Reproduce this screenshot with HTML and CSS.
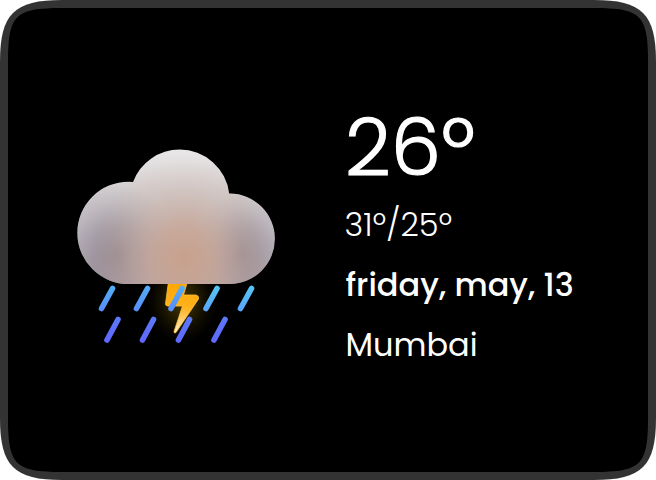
FILE: index.html
```html
<!DOCTYPE html>
<html lang="en">
<head>
<meta charset="utf-8">
<title>Weather</title>
<link rel="stylesheet" href="styles.css">
</head>
<body>
<main class="widget">
  <svg class="frame" viewBox="0 0 656 480" aria-hidden="true">
    <path fill="#333" d="M0 62C0 14 14 0 62 0H594C642 0 656 14 656 62V418C656 466 642 480 594 480H62C14 480 0 466 0 418Z"/>
    <path fill="#000" d="M8 62C8 15 15 8 62 8H594C641 8 648 15 648 62V418C648 465 641 472 594 472H62C15 472 8 465 8 418Z"/>
  </svg>
  <svg class="icon" viewBox="65 130 220 220" aria-hidden="true">
    <defs>
      <linearGradient id="base" x1="0" y1="150" x2="0" y2="284" gradientUnits="userSpaceOnUse">
        <stop offset="0" stop-color="#e9e7e8"/><stop offset=".35" stop-color="#cfcacc"/><stop offset=".7" stop-color="#bbb5bd"/><stop offset="1" stop-color="#b0a4ac"/>
      </linearGradient>
      <radialGradient id="shade"><stop offset="0" stop-color="#85777f" stop-opacity=".75"/><stop offset=".4" stop-color="#867b88" stop-opacity=".48"/><stop offset=".75" stop-color="#8c8492" stop-opacity=".15"/><stop offset="1" stop-color="#8c8594" stop-opacity="0"/></radialGradient>
      <radialGradient id="warm"><stop offset="0" stop-color="#c8a08c"/><stop offset=".3" stop-color="#c9a592" stop-opacity=".8"/><stop offset=".65" stop-color="#ceb0a0" stop-opacity=".35"/><stop offset="1" stop-color="#d4b8a4" stop-opacity="0"/></radialGradient>
      <radialGradient id="glow"><stop offset="0" stop-color="#6b5600" stop-opacity=".75"/><stop offset=".5" stop-color="#3c3000" stop-opacity=".5"/><stop offset="1" stop-color="#1a1500" stop-opacity="0"/></radialGradient>
      <linearGradient id="bolt" x1="180" y1="280" x2="178" y2="334" gradientUnits="userSpaceOnUse">
        <stop offset="0" stop-color="#ffa600"/><stop offset=".5" stop-color="#ffb21c"/><stop offset="1" stop-color="#fff2cc"/>
      </linearGradient>
      <linearGradient id="lower" x1="0" y1="318" x2="0" y2="342" gradientUnits="userSpaceOnUse">
        <stop offset="0" stop-color="#5c78f8"/><stop offset="1" stop-color="#6068ff"/>
      </linearGradient>
      <linearGradient id="drop" x1="0" y1="287" x2="0" y2="311" gradientUnits="userSpaceOnUse">
        <stop offset="0" stop-color="#52adf6"/><stop offset="1" stop-color="#5a8cfb"/>
      </linearGradient>
      <linearGradient id="dropRight" x1="0" y1="287" x2="0" y2="311" gradientUnits="userSpaceOnUse">
        <stop offset="0" stop-color="#55c5f2"/><stop offset="1" stop-color="#5aa3fa"/>
      </linearGradient>
      <clipPath id="cloud">
        <circle cx="128.500" cy="232.900" r="51.200"/>
        <circle cx="179.700" cy="199.300" r="49.800"/>
        <circle cx="229.700" cy="238.800" r="45.200"/>
        <path d="M128.500 200H229.700V284H128.500Z"/>
      </clipPath>
    </defs>
    <ellipse cx="182" cy="301" rx="36" ry="43" fill="url(#glow)"/>
    <path fill="url(#bolt)" stroke="#ffc044" stroke-width=".8" stroke-linejoin="round" d="M169 278L165.500 304Q165.500 306 168 306H182.500L174 331.500Q174 334 176 332.500L198.500 299Q199 295 195 295H183.500L188.500 278Z"/>
    <g stroke-width="5.600" stroke-linecap="round">
      <path stroke="url(#drop)" d="M112.500 288.500L101.500 308.500M147.500 288.500L136.500 308.500M182 288.500L171 308.500"/>
      <path stroke="url(#dropRight)" d="M217 288.500L206 308.500M251.500 288.500L240.500 308.500"/>
      <path stroke="url(#lower)" d="M118 319.500L107 340M153.500 319.500L142.500 340M189.500 319.500L178.500 340M225 319.500L214 340"/>
    </g>
    <g clip-path="url(#cloud)">
      <path fill="url(#base)" d="M70 145H280V285H70Z"/>
      <ellipse cx="117" cy="255" rx="60" ry="72" fill="url(#shade)"/>
      <ellipse cx="241" cy="254" rx="46" ry="62" fill="url(#shade)"/>
      <ellipse cx="184" cy="258" rx="90" ry="100" fill="url(#warm)"/>
    </g>
  </svg>
  <section class="details">
    <p class="temp">26º</p>
    <p class="range">31º/25º</p>
    <p class="date">friday, may, 13</p>
    <p class="city">Mumbai</p>
  </section>
</main>
</body>
</html>
```
FILE: styles.css
```css
* { box-sizing: border-box; }
body { margin: 0; background: #fff; }
.widget {
  position: relative;
  width: 656px;
  height: 480px;
  display: grid;
  grid-template-columns: 220px 1fr;
  column-gap: 59.5px;
  padding: 100px 40px 0 65px;
  overflow: hidden;
  color: #fff;
  font-family: Poppins, Inter, "Open Sans", sans-serif;
}
.frame { position: absolute; inset: 0; width: 656px; height: 480px; }
.icon { position: relative; width: 220px; height: 220px; margin-top: 30px; }
.details { position: relative; }
p { margin: 0; white-space: nowrap; }
.temp {
  height: 95px;
  padding-left: .5px;
  line-height: 95px;
  font-size: 80px;
  font-weight: 300;
  -webkit-text-stroke: 1.2px #fff;
}
.range, .date, .city { height: 60px; line-height: 60px; font-size: 32px; }
.range { font-weight: 300; }
.date { font-weight: 500; }
.city { font-weight: 400; }
.date, .city { padding-left: 1px; }
```
